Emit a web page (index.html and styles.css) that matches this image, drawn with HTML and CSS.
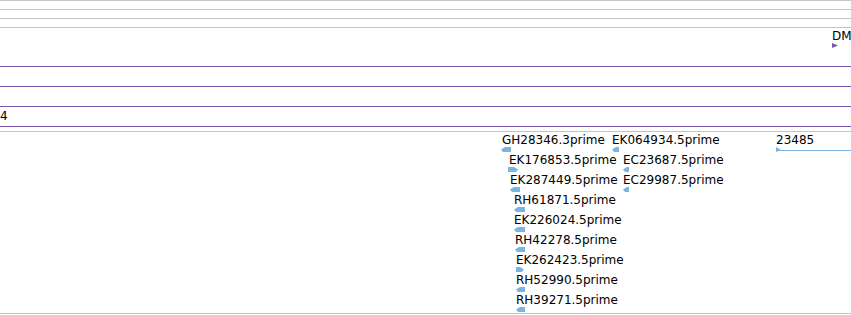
FILE: index.html
```html
<!DOCTYPE html>
<html lang="en">
<head>
  <meta charset="UTF-8" />
  <title>Track view</title>
  <link rel="stylesheet" href="styles.css">
</head>
<body>
  <div class="tracks">
    <div class="rule gray"></div>
    <div class="rule gray"></div>
    <div class="rule gray"></div>
    <div class="rule gray last"></div>

    <!-- gene track -->
    <div class="track gene-track">
      <div class="feature" style="left: 832px; top: 0;">
        <div class="label">DM</div>
        <svg class="glyph" width="6" height="5"><polygon points="0,0 6,2.5 0,5" fill="#7a56ab"/></svg>
      </div>
    </div>

    <div class="rule purple"></div>
    <div class="track thin"></div>
    <div class="rule purple"></div>
    <div class="track thin"></div>
    <div class="rule purple"></div>
    <div class="track thin"><span class="tick">4</span></div>
    <div class="rule purple"></div>
    <div class="track gap"></div>
    <div class="rule gray"></div>

    <!-- EST track -->
    <div class="track est-track">
      <div class="feature" style="left: 501px; top: 0;">
        <div class="label pad1">GH28346.3prime</div>
        <svg class="glyph" width="10" height="5"><polygon points="0,2.5 4,0 10,0 10,5 2,5" fill="#7ab4e0"/></svg>
      </div>
      <div class="feature" style="left: 612px; top: 0;">
        <div class="label">EK064934.5prime</div>
        <svg class="glyph" width="7" height="5"><polygon points="0,2.5 4,0 7,0 7,5 2,5" fill="#7ab4e0"/></svg>
      </div>
      <div class="feature" style="left: 508px; top: 20px;">
        <div class="label pad1">EK176853.5prime</div>
        <svg class="glyph" width="10" height="5"><polygon points="0,0 6,0 10,2.5 8,5 0,5" fill="#7ab4e0"/></svg>
      </div>
      <div class="feature" style="left: 623px; top: 20px;">
        <div class="label">EC23687.5prime</div>
        <svg class="glyph" width="6" height="5"><polygon points="0,2.5 4,0 6,0 6,5 2,5" fill="#7ab4e0"/></svg>
      </div>
      <div class="feature" style="left: 510px; top: 40px;">
        <div class="label">EK287449.5prime</div>
        <svg class="glyph" width="10" height="5"><polygon points="0,2.5 4,0 10,0 10,5 2,5" fill="#7ab4e0"/></svg>
      </div>
      <div class="feature" style="left: 623px; top: 40px;">
        <div class="label">EC29987.5prime</div>
        <svg class="glyph" width="6" height="5"><polygon points="0,2.5 4,0 6,0 6,5 2,5" fill="#7ab4e0"/></svg>
      </div>
      <div class="feature" style="left: 514px; top: 60px;">
        <div class="label">RH61871.5prime</div>
        <svg class="glyph" width="11" height="5"><polygon points="0,2.5 4,0 11,0 11,5 2,5" fill="#7ab4e0"/></svg>
      </div>
      <div class="feature" style="left: 514px; top: 80px;">
        <div class="label">EK226024.5prime</div>
        <svg class="glyph" width="11" height="5"><polygon points="0,2.5 4,0 11,0 11,5 2,5" fill="#7ab4e0"/></svg>
      </div>
      <div class="feature" style="left: 515px; top: 100px;">
        <div class="label">RH42278.5prime</div>
        <svg class="glyph" width="10" height="5"><polygon points="0,2.5 4,0 10,0 10,5 2,5" fill="#7ab4e0"/></svg>
      </div>
      <div class="feature" style="left: 516px; top: 120px;">
        <div class="label">EK262423.5prime</div>
        <svg class="glyph" width="8" height="5"><polygon points="0,0 4,0 8,2.5 6,5 0,5" fill="#7ab4e0"/></svg>
      </div>
      <div class="feature" style="left: 516px; top: 140px;">
        <div class="label">RH52990.5prime</div>
        <svg class="glyph" width="9" height="5"><polygon points="0,2.5 4,0 9,0 9,5 2,5" fill="#7ab4e0"/></svg>
      </div>
      <div class="feature" style="left: 516px; top: 160px;">
        <div class="label">RH39271.5prime</div>
        <svg class="glyph" width="9" height="5"><polygon points="0,2.5 4,0 9,0 9,5 2,5" fill="#7ab4e0"/></svg>
      </div>
      <div class="feature" style="left: 776px; top: 0;">
        <div class="label">23485</div>
        <svg class="glyph" width="75" height="5">
          <line x1="0" y1="3.5" x2="75" y2="3.5" stroke="#7ab4e0" stroke-width="1"/>
          <polygon points="0,0 5,3 0,5" fill="#7ab4e0"/>
        </svg>
      </div>
    </div>

    <div class="rule gray"></div>
  </div>
</body>
</html>
```

FILE: styles.css
```css
* {
  margin: 0;
  padding: 0;
  box-sizing: border-box;
}

body {
  width: 851px;
  height: 315px;
  overflow: hidden;
  background: #fff;
  color: #000;
  font-family: 'DejaVu Sans', sans-serif;
  font-size: 12px;
}

.tracks {
  display: flex;
  flex-direction: column;
}

.rule {
  height: 1px;
  flex: none;
}

.rule.gray {
  background: #c3c3c3;
}

.rule.gray + .rule.gray {
  margin-top: 8px;
}

.rule.purple {
  background: #7a56ab;
}

.track {
  position: relative;
  flex: none;
}

.gene-track {
  height: 38px;
}

.thin {
  height: 19px;
}

.gap {
  height: 4px;
}

.est-track {
  height: 181px;
}

.tick {
  display: block;
  line-height: 14px;
  padding-top: 2px;
}

.feature {
  position: absolute;
  line-height: 14px;
  white-space: nowrap;
}

.label {
  padding-top: 1px;
  height: 15px;
}

.label.pad1 {
  padding-left: 1px;
}

.glyph {
  display: block;
}
```
